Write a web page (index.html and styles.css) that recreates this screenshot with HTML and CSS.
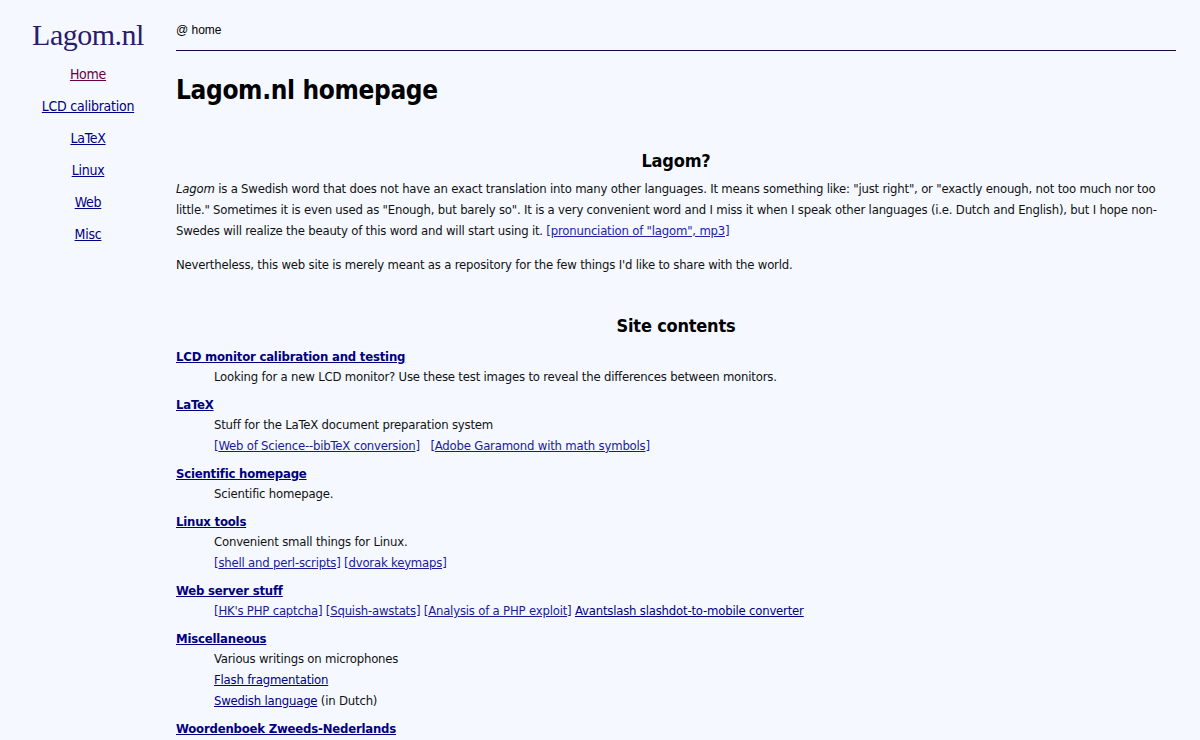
FILE: index.html
```html
<!DOCTYPE html>
<html>
<head>
<meta charset="utf-8">
<title>Lagom.nl homepage</title>
<link rel="stylesheet" href="styles.css">
</head>
<body>
<div class="page">
  <nav class="side">
    <div class="logo">Lagom.nl</div>
    <ul class="menu">
      <li><a class="visited" href="#">Home</a></li>
      <li><a href="#">LCD calibration</a></li>
      <li><a href="#">LaTeX</a></li>
      <li><a href="#">Linux</a></li>
      <li><a href="#">Web</a></li>
      <li><a href="#">Misc</a></li>
    </ul>
  </nav>
  <main class="main">
    <div class="crumb">@ home</div>
    <h1 class="title">Lagom.nl homepage</h1>
    <h2 class="sect first">Lagom?</h2>
    <p class="para"><em>Lagom</em> is a Swedish word that does not have an exact translation into many other languages. It means something like: "just right", or "exactly enough, not too much nor too little." Sometimes it is even used as "Enough, but barely so". It is a very convenient word and I miss it when I speak other languages (i.e. Dutch and English), but I hope non-Swedes will realize the beauty of this word and will start using it. <span class="lk light">[<a href="#">pronunciation of "lagom", mp3</a>]</span></p>
    <p class="para">Nevertheless, this web site is merely meant as a repository for the few things I'd like to share with the world.</p>
    <h2 class="sect second">Site contents</h2>
    <dl class="contents">
      <dt><a href="#">LCD monitor calibration and testing</a></dt>
      <dd>Looking for a new LCD monitor? Use these test images to reveal the differences between monitors.</dd>
      <dt><a href="#">LaTeX</a></dt>
      <dd>Stuff for the LaTeX document preparation system</dd>
      <dd><span class="lk">[<a href="#">Web of Science--bibTeX conversion</a>]</span> &nbsp; <span class="lk">[<a href="#">Adobe Garamond with math symbols</a>]</span></dd>
      <dt><a href="#">Scientific homepage</a></dt>
      <dd>Scientific homepage.</dd>
      <dt><a href="#">Linux tools</a></dt>
      <dd>Convenient small things for Linux.</dd>
      <dd><span class="lk">[<a href="#">shell and perl-scripts</a>]</span> <span class="lk">[<a href="#">dvorak keymaps</a>]</span></dd>
      <dt><a href="#">Web server stuff</a></dt>
      <dd><span class="lk">[<a href="#">HK's PHP captcha</a>]</span> <span class="lk">[<a href="#">Squish-awstats</a>]</span> <span class="lk">[<a href="#">Analysis of a PHP exploit</a>]</span> <a href="#">Avantslash slashdot-to-mobile converter</a></dd>
      <dt><a href="#">Miscellaneous</a></dt>
      <dd>Various writings on microphones</dd>
      <dd><a href="#">Flash fragmentation</a></dd>
      <dd><a href="#">Swedish language</a> (in Dutch)</dd>
      <dt><a href="#">Woordenboek Zweeds-Nederlands</a></dt>
    </dl>
  </main>
</div>
</body>
</html>
```
FILE: styles.css
```css
html, body {
  margin: 0;
  padding: 0;
  background: #f5f9ff;
}
body {
  font-family: "DejaVu Sans Condensed", "DejaVu Sans", sans-serif;
  font-size: 13px;
  letter-spacing: -0.2px;
  color: #111;
}
a {
  color: #000080;
}
.lk {
  color: #1a1a99;
}
.lk a {
  color: inherit;
}
.light {
  color: #2222aa;
}
.page {
  display: flex;
  align-items: flex-start;
}
.side {
  width: 176px;
  flex: none;
  text-align: center;
  padding-top: 14px;
}
.logo {
  font-family: "Liberation Serif", serif;
  font-size: 30px;
  letter-spacing: -0.5px;
  color: #2b1b6b;
  line-height: 42px;
}
.menu {
  list-style: none;
  margin: 2px 0 0 0;
  padding: 0;
}
.menu li {
  height: 32px;
  line-height: 32px;
  font-size: 14px;
  letter-spacing: -0.25px;
}
.menu a.visited {
  color: #660044;
}
.main {
  width: 1000px;
  flex: none;
}
.crumb {
  font-family: "Liberation Sans", sans-serif;
  font-size: 12px;
  letter-spacing: 0;
  color: #000;
  line-height: 16px;
  box-sizing: border-box;
  height: 51px;
  padding-top: 22px;
  border-bottom: 1px solid #1a0a4a;
}
.title {
  font-size: 26px;
  font-weight: bold;
  letter-spacing: -0.35px;
  margin: 23px 0 0 0;
  line-height: 32px;
  color: #000;
}
.sect {
  text-align: center;
  font-size: 18px;
  font-weight: bold;
  margin: 0;
  line-height: 24px;
  color: #000;
}
.sect.first {
  margin-top: 43px;
}
.sect.second {
  margin-top: 39px;
}
.para {
  margin: 5px 0 13px 0;
  line-height: 21px;
}
.contents {
  margin: 8px 0 0 0;
}
.contents dt {
  font-weight: bold;
  line-height: 21px;
  margin-top: 6.3px;
}
.contents dt:first-child {
  margin-top: 0;
}
.contents dd {
  margin-left: 38px;
  line-height: 20.8px;
}
```
